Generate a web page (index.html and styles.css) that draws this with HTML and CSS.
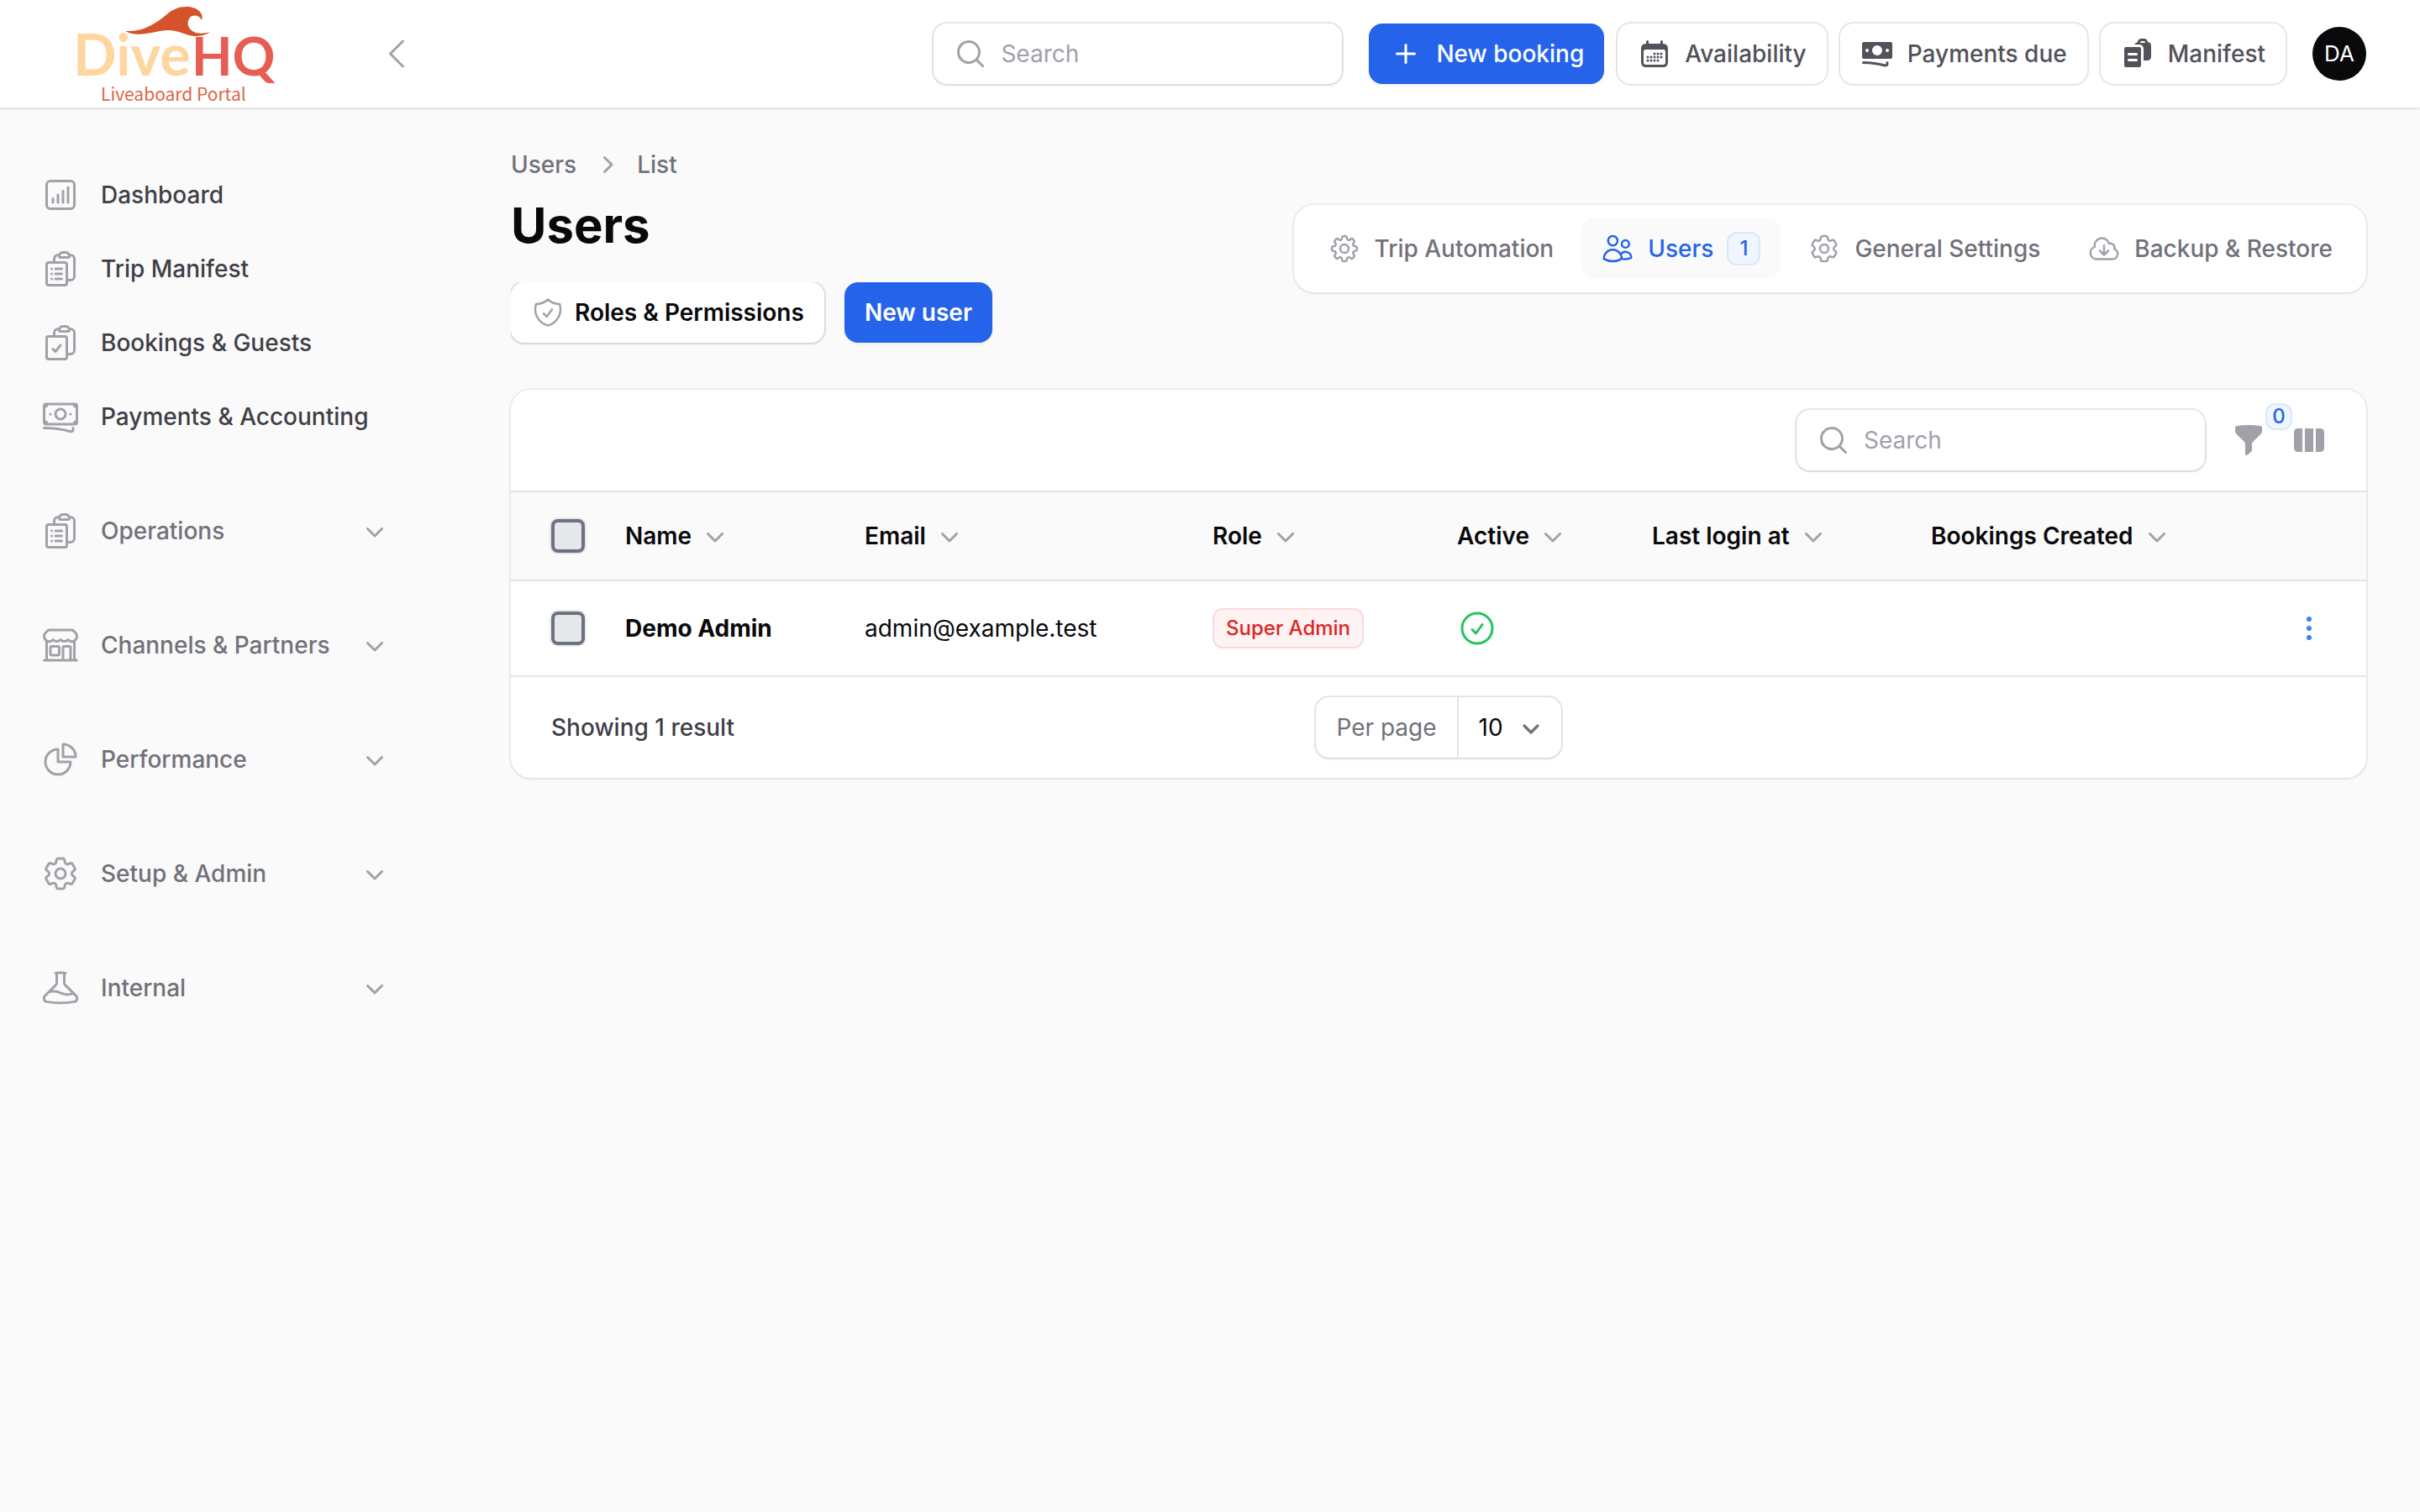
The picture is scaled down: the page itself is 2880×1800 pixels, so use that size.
FILE: index.html
```html
<!DOCTYPE html>
<html lang="en">
<head>
    <meta charset="UTF-8">
    <meta name="viewport" content="width=device-width, initial-scale=1.0">
    <title>Users - DiveHQ</title>
    <link rel="stylesheet" href="styles.css">
</head>
<body>

<!-- icon sprite -->
<svg class="sprite" aria-hidden="true">
    <symbol id="chart-bar" viewBox="0 0 24 24"><path d="M7.5 14.25v2.25m3-4.5v4.5m3-6.75v6.75m3-9v9M6 20.25h12A2.25 2.25 0 0 0 20.25 18V6A2.25 2.25 0 0 0 18 3.75H6A2.25 2.25 0 0 0 3.75 6v12A2.25 2.25 0 0 0 6 20.25Z"/></symbol>
    <symbol id="clipboard-list" viewBox="0 0 24 24"><path d="M9 12h3.75M9 15h3.75M9 18h3.75m3 .75H18a2.25 2.25 0 0 0 2.25-2.25V6.108c0-1.135-.845-2.098-1.976-2.192a48.424 48.424 0 0 0-1.123-.08m-5.801 0c-.065.21-.1.433-.1.664 0 .414.336.75.75.75h4.5a.75.75 0 0 0 .75-.75 2.25 2.25 0 0 0-.1-.664m-5.8 0A2.251 2.251 0 0 1 13.5 2.25H15c1.012 0 1.867.668 2.15 1.586m-5.8 0c-.376.023-.75.05-1.124.08C9.095 4.01 8.25 4.973 8.25 6.108V8.25m0 0H4.875c-.621 0-1.125.504-1.125 1.125v11.25c0 .621.504 1.125 1.125 1.125h9.75c.621 0 1.125-.504 1.125-1.125V9.375c0-.621-.504-1.125-1.125-1.125H8.25ZM6.75 12h.008v.008H6.75V12Zm0 3h.008v.008H6.75V15Zm0 3h.008v.008H6.75V18Z"/></symbol>
    <symbol id="clipboard-check" viewBox="0 0 24 24"><path d="M11.35 3.836c-.065.21-.1.433-.1.664 0 .414.336.75.75.75h4.5a.75.75 0 0 0 .75-.75 2.25 2.25 0 0 0-.1-.664m-5.8 0A2.251 2.251 0 0 1 13.5 2.25H15c1.012 0 1.867.668 2.15 1.586m-5.8 0c-.376.023-.75.05-1.124.08C9.095 4.01 8.25 4.973 8.25 6.108V8.25m8.9-4.414c.376.023.75.05 1.124.08 1.131.094 1.976 1.057 1.976 2.192V16.5A2.25 2.25 0 0 1 18 18.75h-2.25m-7.5-10.5H4.875c-.621 0-1.125.504-1.125 1.125v11.25c0 .621.504 1.125 1.125 1.125h9.75c.621 0 1.125-.504 1.125-1.125V18.75m-7.5-10.5h6.375c.621 0 1.125.504 1.125 1.125v9.375m-8.25-3 1.5 1.5 3-3.75"/></symbol>
    <symbol id="banknotes" viewBox="0 0 24 24"><path d="M2.25 18.75a60.07 60.07 0 0 1 15.797 2.101c.727.198 1.453-.342 1.453-1.096V18.75M3.75 4.5v.75A.75.75 0 0 1 3 6h-.75m0 0v-.375c0-.621.504-1.125 1.125-1.125H20.25M2.25 6v9m18-10.5v.75c0 .414.336.75.75.75h.75m-1.5-1.5h.375c.621 0 1.125.504 1.125 1.125v9.75c0 .621-.504 1.125-1.125 1.125h-.375m1.5-1.5H21a.75.75 0 0 0-.75.75v.75m0 0H3.75m0 0h-.375a1.125 1.125 0 0 1-1.125-1.125V15m1.5 1.5v-.75A.75.75 0 0 0 3 15h-.75M15 10.5a3 3 0 1 1-6 0 3 3 0 0 1 6 0Zm3 0h.008v.008H18V10.5Zm-12 0h.008v.008H6V10.5Z"/></symbol>
    <symbol id="storefront" viewBox="0 0 24 24"><path d="M13.5 21v-7.5a.75.75 0 0 1 .75-.75h3a.75.75 0 0 1 .75.75V21m-4.5 0H2.36m11.14 0H18m0 0h3.64m-1.39 0V9.349M3.75 21V9.349m0 0a3.001 3.001 0 0 0 3.75-.615A2.993 2.993 0 0 0 9.75 9.75c.896 0 1.7-.393 2.25-1.016a2.993 2.993 0 0 0 2.25 1.016c.896 0 1.7-.393 2.25-1.015a3.001 3.001 0 0 0 3.75.614m-16.5 0a3.004 3.004 0 0 1-.621-4.72l1.189-1.19A1.5 1.5 0 0 1 5.378 3h13.243a1.5 1.5 0 0 1 1.06.44l1.19 1.189a3 3 0 0 1-.621 4.72M6.75 18h3.75a.75.75 0 0 0 .75-.75V13.5a.75.75 0 0 0-.75-.75H6.75a.75.75 0 0 0-.75.75v3.75c0 .414.336.75.75.75Z"/></symbol>
    <symbol id="chart-pie" viewBox="0 0 24 24"><path d="M10.5 6a7.5 7.5 0 1 0 7.5 7.5h-7.5V6Z"/><path d="M13.5 10.5H21A7.5 7.5 0 0 0 13.5 3v7.5Z"/></symbol>
    <symbol id="cog-6" viewBox="0 0 24 24"><path d="M9.594 3.94c.09-.542.56-.94 1.11-.94h2.593c.55 0 1.02.398 1.11.94l.213 1.281c.063.374.313.686.645.87.074.04.147.083.22.127.325.196.72.257 1.075.124l1.217-.456a1.125 1.125 0 0 1 1.37.49l1.296 2.247a1.125 1.125 0 0 1-.26 1.431l-1.003.827c-.293.241-.438.613-.43.992a7.723 7.723 0 0 1 0 .255c-.008.378.137.75.43.991l1.004.827c.424.35.534.955.26 1.43l-1.298 2.247a1.125 1.125 0 0 1-1.369.491l-1.217-.456c-.355-.133-.75-.072-1.076.124a6.47 6.47 0 0 1-.22.128c-.331.183-.581.495-.644.869l-.213 1.281c-.09.543-.56.94-1.11.94h-2.594c-.55 0-1.019-.398-1.11-.94l-.213-1.281c-.062-.374-.312-.686-.644-.87a6.52 6.52 0 0 1-.22-.127c-.325-.196-.72-.257-1.076-.124l-1.217.456a1.125 1.125 0 0 1-1.369-.49l-1.297-2.247a1.125 1.125 0 0 1 .26-1.431l1.004-.827c.292-.24.437-.613.43-.991a6.932 6.932 0 0 1 0-.255c.007-.38-.138-.751-.43-.992l-1.004-.827a1.125 1.125 0 0 1-.26-1.43l1.297-2.247a1.125 1.125 0 0 1 1.37-.491l1.216.456c.356.133.751.072 1.076-.124.072-.044.146-.086.22-.128.332-.183.582-.495.644-.869l.214-1.28Z"/><path d="M15 12a3 3 0 1 1-6 0 3 3 0 0 1 6 0Z"/></symbol>
    <symbol id="cog-8" viewBox="0 0 24 24"><path d="M10.343 3.94c.09-.542.56-.94 1.11-.94h1.093c.55 0 1.02.398 1.11.94l.149.894c.07.424.384.764.78.93.398.164.855.142 1.205-.108l.737-.527a1.125 1.125 0 0 1 1.45.12l.773.774c.39.389.44 1.002.12 1.45l-.527.737c-.25.35-.272.806-.107 1.204.165.397.505.71.93.78l.893.15c.543.09.94.559.94 1.109v1.094c0 .55-.397 1.02-.94 1.11l-.894.149c-.424.07-.764.383-.929.78-.165.398-.143.854.107 1.204l.527.738c.32.447.269 1.06-.12 1.45l-.774.773a1.125 1.125 0 0 1-1.449.12l-.738-.527c-.35-.25-.806-.272-1.203-.107-.398.165-.71.505-.781.929l-.149.894c-.09.542-.56.94-1.11.94h-1.094c-.55 0-1.019-.398-1.11-.94l-.148-.894c-.071-.424-.384-.764-.781-.93-.398-.164-.854-.142-1.204.108l-.738.527c-.447.32-1.06.269-1.45-.12l-.773-.774a1.125 1.125 0 0 1-.12-1.45l.527-.737c.25-.35.272-.806.108-1.204-.165-.397-.506-.71-.93-.78l-.894-.15c-.542-.09-.94-.56-.94-1.109v-1.094c0-.55.398-1.02.94-1.11l.894-.149c.424-.07.765-.383.93-.78.165-.398.143-.854-.108-1.204l-.526-.738a1.125 1.125 0 0 1 .12-1.45l.773-.773a1.125 1.125 0 0 1 1.45-.12l.737.527c.35.25.807.272 1.204.107.397-.165.71-.505.78-.929l.15-.894Z"/><path d="M15 12a3 3 0 1 1-6 0 3 3 0 0 1 6 0Z"/></symbol>
    <symbol id="beaker" viewBox="0 0 24 24"><path d="M9.75 3.104v5.714a2.25 2.25 0 0 1-.659 1.591L5 14.5M9.75 3.104c-.251.023-.501.05-.75.082m.75-.082a24.301 24.301 0 0 1 4.5 0m0 0v5.714c0 .597.237 1.17.659 1.591L19.8 15.3M14.25 3.104c.251.023.501.05.75.082M19.8 15.3l-1.57.393A9.065 9.065 0 0 1 12 15a9.065 9.065 0 0 0-6.23-.693L5 14.5m14.8.8 1.402 1.402c1.232 1.232.65 3.318-1.067 3.611A48.309 48.309 0 0 1 12 21c-2.773 0-5.491-.235-8.135-.687-1.718-.293-2.3-2.379-1.067-3.61L5 14.5"/></symbol>
    <symbol id="users" viewBox="0 0 24 24"><path d="M15 19.128a9.38 9.38 0 0 0 2.625.372 9.337 9.337 0 0 0 4.121-.952 4.125 4.125 0 0 0-7.533-2.493M15 19.128v-.003c0-1.113-.285-2.16-.786-3.07M15 19.128v.106A12.318 12.318 0 0 1 8.624 21c-2.331 0-4.512-.645-6.374-1.766l-.001-.109a6.375 6.375 0 0 1 11.964-3.07M12 6.375a3.375 3.375 0 1 1-6.75 0 3.375 3.375 0 0 1 6.75 0Zm8.25 2.25a2.625 2.625 0 1 1-5.25 0 2.625 2.625 0 0 1 5.25 0Z"/></symbol>
    <symbol id="cloud-down" viewBox="0 0 24 24"><path d="M12 9.75v6.75m0 0-3-3m3 3 3-3m-8.25 6a4.5 4.5 0 0 1-1.41-8.775 5.25 5.25 0 0 1 10.233-2.33 3 3 0 0 1 3.758 3.848A3.752 3.752 0 0 1 18 19.5H6.75Z"/></symbol>
    <symbol id="shield-check" viewBox="0 0 24 24"><path d="M9 12.75 11.25 15 15 9.75m-3-7.036A11.959 11.959 0 0 1 3.598 6 11.99 11.99 0 0 0 3 9.749c0 5.592 3.824 10.29 9 11.623 5.176-1.332 9-6.03 9-11.622 0-1.31-.21-2.571-.598-3.751h-.152c-3.196 0-6.1-1.248-8.25-3.285Z"/></symbol>
    <symbol id="check-circle" viewBox="0 0 24 24"><path d="M9 12.75 11.25 15 15 9.75M21 12a9 9 0 1 1-18 0 9 9 0 0 1 18 0Z"/></symbol>
    <symbol id="collapse" viewBox="0 0 24 24"><path d="M15.75 19.5 8.25 12l7.5-7.5"/></symbol>
    <symbol id="search" viewBox="0 0 20 20"><path fill-rule="evenodd" d="M9 3.5a5.5 5.5 0 1 0 0 11 5.5 5.5 0 0 0 0-11ZM2 9a7 7 0 1 1 12.452 4.391l3.328 3.329a.75.75 0 1 1-1.06 1.06l-3.329-3.328A7 7 0 0 1 2 9Z"/></symbol>
    <symbol id="chevron-down" viewBox="0 0 20 20"><path d="M5.22 8.22a.75.75 0 0 1 1.06 0L10 11.94l3.72-3.72a.75.75 0 1 1 1.06 1.06l-4.25 4.25a.75.75 0 0 1-1.06 0L5.22 9.28a.75.75 0 0 1 0-1.06Z"/></symbol>
    <symbol id="chevron-right" viewBox="0 0 20 20"><path d="M8.22 5.22a.75.75 0 0 1 1.06 0l4.25 4.25a.75.75 0 0 1 0 1.06l-4.25 4.25a.75.75 0 0 1-1.06-1.06L11.94 10 8.22 6.28a.75.75 0 0 1 0-1.06Z"/></symbol>
    <symbol id="plus" viewBox="0 0 20 20"><path d="M10.75 4.75a.75.75 0 0 0-1.5 0v4.5h-4.5a.75.75 0 0 0 0 1.5h4.5v4.5a.75.75 0 0 0 1.5 0v-4.5h4.5a.75.75 0 0 0 0-1.5h-4.5v-4.5Z"/></symbol>
    <symbol id="calendar" viewBox="0 0 20 20">
        <path fill-rule="evenodd" d="M5.75 2a.75.75 0 0 1 .75.75V4h7V2.75a.75.75 0 0 1 1.5 0V4h.25A2.75 2.75 0 0 1 18 6.75v8.5A2.75 2.75 0 0 1 15.25 18H4.75A2.75 2.75 0 0 1 2 15.25v-8.5A2.75 2.75 0 0 1 4.75 4H5V2.75A.75.75 0 0 1 5.75 2Zm-1 5.5c-.69 0-1.25.56-1.25 1.25v6.5c0 .69.56 1.25 1.25 1.25h10.5c.69 0 1.25-.56 1.25-1.25v-6.5c0-.69-.56-1.25-1.25-1.25H4.75Z"/>
        <circle cx="10" cy="10" r=".75"/><circle cx="12" cy="10" r=".75"/><circle cx="14" cy="10" r=".75"/>
        <circle cx="6" cy="12" r=".75"/><circle cx="8" cy="12" r=".75"/><circle cx="10" cy="12" r=".75"/><circle cx="12" cy="12" r=".75"/><circle cx="14" cy="12" r=".75"/>
        <circle cx="6" cy="14" r=".75"/><circle cx="8" cy="14" r=".75"/><circle cx="10" cy="14" r=".75"/><circle cx="12" cy="14" r=".75"/>
    </symbol>
    <symbol id="banknotes-solid" viewBox="0 0 20 20"><path fill-rule="evenodd" d="M1 4a1 1 0 0 1 1-1h16a1 1 0 0 1 1 1v8a1 1 0 0 1-1 1H2a1 1 0 0 1-1-1V4Zm12 4a3 3 0 1 1-6 0 3 3 0 0 1 6 0ZM4 9a1 1 0 1 0 0-2 1 1 0 0 0 0 2Zm13-1a1 1 0 1 1-2 0 1 1 0 0 1 2 0ZM1.75 14.5a.75.75 0 0 0 0 1.5c4.417 0 8.693.603 12.749 1.73 1.111.309 2.251-.512 2.251-1.696v-.784a.75.75 0 0 0-1.5 0v.784a.272.272 0 0 1-.35.25A49.043 49.043 0 0 0 1.75 14.5Z"/></symbol>
    <symbol id="clipboard-solid" viewBox="0 0 20 20"><path fill-rule="evenodd" d="M15.988 3.012A2.25 2.25 0 0 1 18 5.25v6.5A2.25 2.25 0 0 1 15.75 14H13.5V7A2.5 2.5 0 0 0 11 4.5H8.128a2.252 2.252 0 0 1 1.884-1.488A2.25 2.25 0 0 1 12.25 1h1.5a2.25 2.25 0 0 1 2.238 2.012ZM11.5 3.25a.75.75 0 0 1 .75-.75h1.5a.75.75 0 0 1 .75.75v.25h-3v-.25Z"/><path fill-rule="evenodd" d="M2 7a1 1 0 0 1 1-1h8a1 1 0 0 1 1 1v10a1 1 0 0 1-1 1H3a1 1 0 0 1-1-1V7Zm2 3.25a.75.75 0 0 1 .75-.75h4.5a.75.75 0 0 1 0 1.5h-4.5a.75.75 0 0 1-.75-.75Zm0 3.5a.75.75 0 0 1 .75-.75h4.5a.75.75 0 0 1 0 1.5h-4.5a.75.75 0 0 1-.75-.75Z"/></symbol>
    <symbol id="funnel" viewBox="0 0 20 20"><path d="M2.628 1.601C5.028 1.206 7.49 1 10 1s4.973.206 7.372.601a.75.75 0 0 1 .628.74v2.288a2.25 2.25 0 0 1-.659 1.59l-4.682 4.683a2.25 2.25 0 0 0-.659 1.59v3.037c0 .684-.31 1.33-.844 1.757l-1.937 1.55A.75.75 0 0 1 8 18.25v-5.757a2.25 2.25 0 0 0-.659-1.591L2.659 6.22A2.25 2.25 0 0 1 2 4.629V2.34a.75.75 0 0 1 .628-.74Z"/></symbol>
    <symbol id="columns" viewBox="0 0 20 20"><path d="M14 17h2.75A2.25 2.25 0 0 0 19 14.75v-9.5A2.25 2.25 0 0 0 16.75 3H14v14ZM12.5 3h-5v14h5V3ZM3.25 3H6v14H3.25A2.25 2.25 0 0 1 1 14.75v-9.5A2.25 2.25 0 0 1 3.25 3Z"/></symbol>
    <symbol id="dots" viewBox="0 0 20 20"><circle cx="10" cy="4.5" r="1.5"/><circle cx="10" cy="10" r="1.5"/><circle cx="10" cy="15.5" r="1.5"/></symbol>
</svg>

<header class="topbar">
    <div class="brand">
        <a href="#" class="logo" aria-label="DiveHQ Liveaboard Portal">
            <svg width="244" height="128" viewBox="88 0 244 128">
                <path class="logo-wave" d="M149 37C166 38 180 32 195 20C205 11 212 8 222 8C235 8 243 16 240 24C237 18 230 17 226 21C222 26 223 33 229 37C235 41 243 40 250 38C245 42 238 43 232 43C219 42 214 36 200 36C185 36 165 46 149 37Z"/>
                <text class="logo-dive" x="87" y="90">Dive</text>
                <text class="logo-hq" x="228" y="90">HQ</text>
                <text class="logo-sub" x="120" y="120">Liveaboard Portal</text>
            </svg>
        </a>
        <button class="icon-btn" aria-label="Collapse sidebar"><svg class="icon icon-lg outline"><use href="#collapse"/></svg></button>
    </div>
    <div class="topbar-end">
        <div class="search">
            <svg class="icon solid"><use href="#search"/></svg>
            <input type="search" placeholder="Search" aria-label="Global search">
        </div>
        <div class="quick-actions">
            <button class="btn btn-top btn-primary"><svg class="icon solid"><use href="#plus"/></svg>New booking</button>
            <button class="btn btn-top btn-ring"><svg class="icon solid"><use href="#calendar"/></svg>Availability</button>
            <button class="btn btn-top btn-ring"><svg class="icon solid"><use href="#banknotes-solid"/></svg>Payments due</button>
            <button class="btn btn-top btn-ring"><svg class="icon solid"><use href="#clipboard-solid"/></svg>Manifest</button>
        </div>
        <button class="avatar">DA</button>
    </div>
</header>

<div class="layout">
    <nav class="sidebar">
        <div class="nav-list">
            <a href="#" class="nav-item"><svg class="icon icon-lg outline"><use href="#chart-bar"/></svg>Dashboard</a>
            <a href="#" class="nav-item"><svg class="icon icon-lg outline"><use href="#clipboard-list"/></svg>Trip Manifest</a>
            <a href="#" class="nav-item"><svg class="icon icon-lg outline"><use href="#clipboard-check"/></svg>Bookings &amp; Guests</a>
            <a href="#" class="nav-item"><svg class="icon icon-lg outline"><use href="#banknotes"/></svg>Payments &amp; Accounting</a>
        </div>
        <button class="nav-item nav-group"><svg class="icon icon-lg outline"><use href="#clipboard-list"/></svg><span>Operations</span><svg class="icon solid"><use href="#chevron-down"/></svg></button>
        <button class="nav-item nav-group"><svg class="icon icon-lg outline"><use href="#storefront"/></svg><span>Channels &amp; Partners</span><svg class="icon solid"><use href="#chevron-down"/></svg></button>
        <button class="nav-item nav-group"><svg class="icon icon-lg outline"><use href="#chart-pie"/></svg><span>Performance</span><svg class="icon solid"><use href="#chevron-down"/></svg></button>
        <button class="nav-item nav-group"><svg class="icon icon-lg outline"><use href="#cog-6"/></svg><span>Setup &amp; Admin</span><svg class="icon solid"><use href="#chevron-down"/></svg></button>
        <button class="nav-item nav-group"><svg class="icon icon-lg outline"><use href="#beaker"/></svg><span>Internal</span><svg class="icon solid"><use href="#chevron-down"/></svg></button>
    </nav>

    <main class="main">
        <div class="page-header">
            <div class="page-heading">
                <div class="breadcrumbs">
                    <a href="#">Users</a>
                    <svg class="icon solid"><use href="#chevron-right"/></svg>
                    <a href="#">List</a>
                </div>
                <h1>Users</h1>
                <div class="page-actions">
                    <button class="btn btn-gray"><svg class="icon outline"><use href="#shield-check"/></svg>Roles &amp; Permissions</button>
                    <button class="btn btn-primary">New user</button>
                </div>
            </div>
            <nav class="tabs">
                <a href="#" class="tab"><svg class="icon outline"><use href="#cog-8"/></svg>Trip Automation</a>
                <a href="#" class="tab active"><svg class="icon outline"><use href="#users"/></svg>Users<span class="badge">1</span></a>
                <a href="#" class="tab"><svg class="icon outline"><use href="#cog-6"/></svg>General Settings</a>
                <a href="#" class="tab"><svg class="icon outline"><use href="#cloud-down"/></svg>Backup &amp; Restore</a>
            </nav>
        </div>

        <section class="card">
            <div class="card-toolbar">
                <div class="search">
                    <svg class="icon solid"><use href="#search"/></svg>
                    <input type="search" placeholder="Search" aria-label="Search users">
                </div>
                <div class="card-tools">
                    <button class="icon-btn" aria-label="Filter"><svg class="icon solid"><use href="#funnel"/></svg><span class="badge badge-corner">0</span></button>
                    <button class="icon-btn" aria-label="Columns"><svg class="icon solid"><use href="#columns"/></svg></button>
                </div>
            </div>

            <table>
                <colgroup>
                    <col class="col-check">
                    <col class="col-name">
                    <col class="col-email">
                    <col class="col-role">
                    <col class="col-active">
                    <col class="col-login">
                    <col>
                    <col class="col-menu">
                </colgroup>
                <thead>
                    <tr>
                        <th class="check-cell"><input type="checkbox" aria-label="Select all"></th>
                        <th><button class="sort">Name<svg class="icon solid"><use href="#chevron-down"/></svg></button></th>
                        <th><button class="sort">Email<svg class="icon solid"><use href="#chevron-down"/></svg></button></th>
                        <th><button class="sort">Role<svg class="icon solid"><use href="#chevron-down"/></svg></button></th>
                        <th><button class="sort">Active<svg class="icon solid"><use href="#chevron-down"/></svg></button></th>
                        <th><button class="sort">Last login at<svg class="icon solid"><use href="#chevron-down"/></svg></button></th>
                        <th><button class="sort">Bookings Created<svg class="icon solid"><use href="#chevron-down"/></svg></button></th>
                        <th></th>
                    </tr>
                </thead>
                <tbody>
                    <tr>
                        <td class="check-cell"><input type="checkbox" aria-label="Select Demo Admin"></td>
                        <td class="name">Demo Admin</td>
                        <td>admin@example.test</td>
                        <td><span class="role-badge">Super Admin</span></td>
                        <td><svg class="icon icon-lg outline is-active"><use href="#check-circle"/></svg></td>
                        <td></td>
                        <td></td>
                        <td class="menu-cell"><button class="icon-btn row-menu" aria-label="Actions"><svg class="icon solid"><use href="#dots"/></svg></button></td>
                    </tr>
                </tbody>
            </table>

            <div class="card-footer">
                <span class="summary">Showing 1 result</span>
                <div class="per-page">
                    <label for="perPage">Per page</label>
                    <select id="perPage">
                        <option>5</option>
                        <option selected>10</option>
                        <option>25</option>
                        <option>50</option>
                    </select>
                </div>
            </div>
        </section>
    </main>
</div>

</body>
</html>
```

FILE: styles.css
```css
* {
    box-sizing: border-box;
}

body {
    margin: 0;
    min-height: 100vh;
    background-color: #fafafa;
    color: #09090b;
    font-family: Inter, sans-serif;
    font-size: 28px;
    line-height: 40px;
}

a {
    color: inherit;
    text-decoration: none;
}

button, input, select {
    font: inherit;
    color: inherit;
}

button {
    border: none;
    background: none;
    padding: 0;
    cursor: pointer;
}

/* icons */
.sprite {
    display: none;
}

.icon {
    width: 40px;
    height: 40px;
    flex-shrink: 0;
    color: #a1a1aa;
}

.icon-lg {
    width: 48px;
    height: 48px;
}

.outline {
    fill: none;
    stroke: currentColor;
    stroke-width: 1.5;
    stroke-linecap: round;
    stroke-linejoin: round;
}

.solid {
    fill: currentColor;
}

.icon-btn {
    position: relative;
    display: flex;
    align-items: center;
    justify-content: center;
    width: 72px;
    height: 72px;
}

/* top bar */
.topbar {
    display: flex;
    align-items: center;
    justify-content: space-between;
    height: 128px;
    padding-right: 64px;
    background-color: #fff;
    box-shadow: 0 0 0 2px rgba(9, 9, 11, 0.05), 0 2px 4px rgba(0, 0, 0, 0.06);
}

.brand {
    display: flex;
    align-items: center;
    justify-content: space-between;
    width: 508px;
    padding-left: 88px;
}

.logo svg {
    display: block;
}

.logo-wave {
    fill: #d4532a;
}

.logo-dive, .logo-hq {
    font-family: Lato, sans-serif;
    font-weight: 700;
}

.logo-dive {
    fill: #fed6a0;
    font-size: 68px;
}

.logo-hq {
    fill: #e85d52;
    font-size: 63px;
}

.logo-sub {
    fill: #dd6547;
    font-family: "Noto Sans CJK SC", sans-serif;
    font-size: 21px;
}

.topbar-end {
    display: flex;
    align-items: center;
    gap: 32px;
}

.quick-actions {
    display: flex;
    gap: 16px;
}

.search {
    display: flex;
    align-items: center;
    gap: 16px;
    width: 486px;
    height: 72px;
    padding: 0 24px;
    border-radius: 16px;
    background-color: #fff;
    box-shadow: 0 0 0 2px rgba(9, 9, 11, 0.1), 0 2px 4px rgba(0, 0, 0, 0.05);
}

.search input {
    flex: 1;
    min-width: 0;
    padding: 0;
    border: none;
    outline: none;
    background: none;
    appearance: none;
}

.search input::placeholder {
    color: #a1a1aa;
    opacity: 1;
}

.avatar {
    width: 64px;
    height: 64px;
    border-radius: 50%;
    background-color: #09090b;
    color: #fff;
    font-size: 26px;
}

/* buttons */
.btn {
    display: flex;
    align-items: center;
    gap: 12px;
    height: 72px;
    padding: 0 24px;
    border-radius: 16px;
    font-weight: 600;
    white-space: nowrap;
}

.btn-top {
    gap: 16px;
    font-weight: 500;
}

.btn-primary {
    background-color: #2563eb;
    color: #fff;
    box-shadow: 0 2px 4px rgba(0, 0, 0, 0.05);
}

.btn-primary .icon {
    color: #fff;
}

.btn-ring {
    background-color: #fff;
    color: #52525b;
    box-shadow: 0 0 0 2px rgba(9, 9, 11, 0.1);
}

.btn-ring .icon {
    color: #52525b;
}

.btn-gray {
    background-color: #fff;
    box-shadow: 0 0 0 2px rgba(9, 9, 11, 0.1), 0 2px 4px rgba(0, 0, 0, 0.05);
}

/* page layout */
.layout {
    display: flex;
}

.sidebar {
    display: flex;
    flex-direction: column;
    gap: 56px;
    width: 544px;
    flex-shrink: 0;
    padding: 64px 62px 64px 32px;
}

.nav-list {
    display: flex;
    flex-direction: column;
    gap: 8px;
}

.nav-item {
    display: flex;
    align-items: center;
    gap: 24px;
    height: 80px;
    padding: 0 16px;
    color: #3f3f46;
    font-weight: 500;
    text-align: left;
    white-space: nowrap;
}

.nav-group {
    color: #71717a;
}

.nav-group span {
    flex: 1;
}

.main {
    flex: 1;
    min-width: 0;
    padding: 48px 64px;
}

.page-header {
    display: flex;
    align-items: center;
    justify-content: space-between;
    margin-bottom: 48px;
}

.breadcrumbs {
    display: flex;
    align-items: center;
    gap: 16px;
    color: #71717a;
    font-weight: 500;
}

h1 {
    margin: 16px 0 32px;
    font-size: 58px;
    line-height: 72px;
    font-weight: 700;
}

.page-actions {
    display: flex;
    gap: 24px;
    padding: 0 8px 8px 0;
    overflow: hidden;
}

.tabs {
    display: flex;
    gap: 8px;
    padding: 16px;
    border-radius: 24px;
    background-color: #fff;
    box-shadow: 0 0 0 2px rgba(9, 9, 11, 0.05), 0 2px 4px rgba(0, 0, 0, 0.05);
}

.tab {
    display: flex;
    align-items: center;
    gap: 16px;
    height: 72px;
    padding: 0 24px;
    border-radius: 16px;
    color: #71717a;
    font-weight: 500;
    white-space: nowrap;
}

.tab.active {
    background-color: #fafafa;
    color: #2563eb;
}

.tab.active .icon {
    color: #2563eb;
}

.badge {
    min-width: 40px;
    height: 40px;
    border: 2px solid #dbe6fd;
    border-radius: 12px;
    background-color: #eff6ff;
    color: #2563eb;
    font-size: 24px;
    line-height: 36px;
    font-weight: 500;
    text-align: center;
}

/* sits on the top right corner of the filter button */
.badge-corner {
    position: absolute;
    top: -8px;
    right: -16px;
    min-width: 32px;
    height: 32px;
    line-height: 28px;
}

/* table card */
.card {
    border-radius: 24px;
    background-color: #fff;
    box-shadow: 0 0 0 2px rgba(9, 9, 11, 0.05), 0 2px 4px rgba(0, 0, 0, 0.05);
}

.card-toolbar {
    display: flex;
    justify-content: flex-end;
    gap: 16px;
    padding: 24px 32px;
}

.card-tools {
    display: flex;
}

table {
    width: 100%;
    border-collapse: collapse;
    table-layout: fixed;
}

.col-check {
    width: 112px;
}

.col-name {
    width: 285px;
}

.col-email {
    width: 414px;
}

.col-role {
    width: 291px;
}

.col-active {
    width: 232px;
}

.col-login {
    width: 332px;
}

.col-menu {
    width: 136px;
}

th, td {
    padding: 0 24px;
    text-align: left;
    white-space: nowrap;
}

th {
    height: 106px;
    border-top: 2px solid #e4e4e7;
    border-bottom: 2px solid #e4e4e7;
    background-color: #fafafa;
    font-weight: 600;
}

td {
    height: 114px;
    border-bottom: 2px solid #e4e4e7;
}

td .icon {
    display: block;
}

.check-cell {
    padding: 0 0 0 48px;
}

.menu-cell {
    padding: 0 32px;
}

.sort {
    display: flex;
    align-items: center;
    gap: 8px;
}

input[type="checkbox"] {
    display: block;
    width: 40px;
    height: 40px;
    margin: 0;
    appearance: none;
    border: 4px solid #6b7280;
    border-radius: 8px;
    background-color: #e5e7eb;
    box-shadow: 0 0 0 2px rgba(9, 9, 11, 0.08);
}

.name {
    font-weight: 700;
}

.role-badge {
    display: inline-block;
    padding: 0 14px;
    border: 2px solid #fadadd;
    border-radius: 12px;
    background-color: #fef2f2;
    color: #dc2626;
    font-size: 24px;
    line-height: 44px;
    font-weight: 500;
}

.icon.is-active {
    color: #22c55e;
}

.row-menu .icon {
    color: #3b82f6;
}

.card-footer {
    display: grid;
    grid-template-columns: 1fr auto 1fr;
    align-items: center;
    padding: 24px 48px;
}

.summary {
    color: #3f3f46;
    font-weight: 500;
}

.per-page {
    display: flex;
    align-items: center;
    height: 72px;
    border-radius: 16px;
    box-shadow: 0 0 0 2px rgba(9, 9, 11, 0.1), 0 2px 4px rgba(0, 0, 0, 0.05);
}

.per-page label {
    padding: 0 24px;
    color: #71717a;
}

.per-page select {
    width: 124px;
    height: 72px;
    padding: 0 0 0 24px;
    border: none;
    border-left: 2px solid #e4e4e7;
    appearance: none;
    background: url("data:image/svg+xml,%3Csvg xmlns='http://www.w3.org/2000/svg' fill='none' viewBox='0 0 20 20'%3E%3Cpath stroke='%2371717a' stroke-linecap='round' stroke-linejoin='round' stroke-width='1.6' d='m6 9 4 4 4-4'/%3E%3C/svg%3E") no-repeat right 16px center / 40px 40px;
}
```
